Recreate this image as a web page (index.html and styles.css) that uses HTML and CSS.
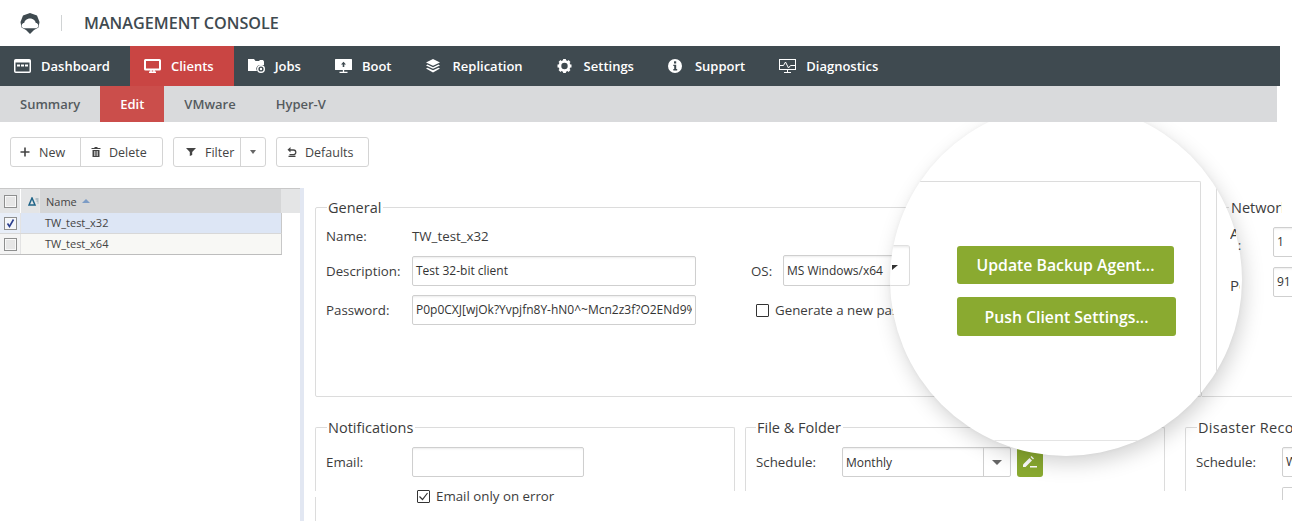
FILE: index.html
```html
<!DOCTYPE html>
<html lang="en">
<head>
<meta charset="utf-8">
<title>Management Console</title>
<link rel="stylesheet" href="styles.css">
</head>
<body>
<div class="page">
  <header class="topbar">
    <svg class="logo" viewBox="0 0 20 21" width="20" height="21"><path fill="#3f4a50" d="M10 0 L17 2.500 L19.500 9 L18.500 14.500 L14 17 L10 21 L6 17 L1.500 14.500 L.5 9 L3 2.500Z"/><path fill="#fff" d="M4 15.300C2 15 1.300 13.400 1.800 11.800 2.200 10.700 3.200 10.100 4.200 10.100 4.500 7.800 6.900 5.600 10 5.600 13.100 5.600 15.500 7.800 15.800 10.100 16.800 10.100 17.800 10.700 18.200 11.800 18.700 13.400 18 15 16 15.300Z"/></svg>
    <span class="topbar-divider"></span>
    <h1 class="title">MANAGEMENT CONSOLE</h1>
  </header>

  <nav class="mainnav">
    <a class="nav-item"><svg class="nav-icon" viewBox="0 0 17 14"><rect x=".75" y=".75" width="15.5" height="12.5" rx="1" fill="none" stroke="#fff" stroke-width="1.500"/><rect x="1" y="1" width="15" height="2.500" fill="#fff"/><path stroke="#fff" stroke-width="2" d="M3 6.500h3M7 6.500h3M11 6.500h3"/></svg>Dashboard</a>
    <a class="nav-item active"><svg class="nav-icon" viewBox="0 0 17 14"><rect x="1" y="1" width="15" height="9.500" rx=".5" fill="none" stroke="#fff" stroke-width="2"/><path stroke="#fff" stroke-width="1.500" d="M7 11v1.500M10 11v1.500M5 13.200h7"/></svg>Clients</a>
    <a class="nav-item"><svg class="nav-icon" viewBox="0 0 17 14"><path fill="#fff" d="M0 0h6l1.500 2h3.500l1-1h3l1 1.500v3.500h-5a4 4 0 0 0-2 6h-9.500z"/><circle cx="13" cy="10" r="3.300" fill="none" stroke="#fff" stroke-width="1.400"/><circle cx="13" cy="10" r="1.200" fill="#fff"/></svg>Jobs</a>
    <a class="nav-item"><svg class="nav-icon" viewBox="0 0 17 14"><rect width="17" height="11" rx=".5" fill="#fff"/><path fill="#3f4a50" d="M8.500 2.800l2.500 2.700h-1.700v2.500h-1.600v-2.500h-1.700z"/><path stroke="#fff" stroke-width="1.300" d="M8.500 11v2M4.500 13.400h8"/></svg>Boot</a>
    <a class="nav-item"><svg class="nav-icon" viewBox="0 0 17 14"><g transform="translate(-1.500 0)"><path fill="#fff" d="M8.500 0l7 3.400-7 3.400-7-3.400z"/><path fill="#fff" d="M3 5.600l5.500 2.700 5.500-2.700 1.500.8-7 3.400-7-3.400z"/><path fill="#fff" d="M3 8.700l5.500 2.600 5.500-2.600 1.500.8-7 4-7-4z"/></g></svg>Replication</a>
    <a class="nav-item"><svg class="nav-icon" viewBox="0 0 17 14"><g transform="translate(7.500 7)"><circle r="4.600" fill="none" stroke="#fff" stroke-width="2.800"/><path stroke="#fff" stroke-width="2.800" d="M0-7v14M-7 0h14M-5-5l10 10M-5 5l10-10" stroke-dasharray="2.300 9.800"/></g></svg>Settings</a>
    <a class="nav-item"><svg class="nav-icon" viewBox="0 0 17 14"><circle cx="7" cy="7" r="7" fill="#fff"/><rect x="6" y="2.300" width="2.200" height="2.200" fill="#3f4a50"/><path fill="#3f4a50" d="M5.300 5.700h2.900v4.400h1v1.300h-3.900v-1.300h.9v-3.100h-.9z"/></svg>Support</a>
    <a class="nav-item"><svg class="nav-icon" viewBox="0 0 17 14"><rect x=".5" y=".5" width="16" height="10" fill="none" stroke="#fff"/><path fill="none" stroke="#fff" d="M1 6.500h3.500l2-3.500 3 6 2-2.500h4.500"/><path stroke="#fff" d="M8.500 11v2M5 13.500h7"/></svg>Diagnostics</a>
  </nav>

  <nav class="subnav">
    <a class="sub-item">Summary</a>
    <a class="sub-item active">Edit</a>
    <a class="sub-item">VMware</a>
    <a class="sub-item">Hyper-V</a>
  </nav>

  <div class="toolbar">
    <div class="btn-group">
      <button class="tool-btn btn-new"><svg class="tool-icon" viewBox="0 0 10 10"><path stroke="#444" stroke-width="1.600" d="M5 .5v9M.5 5h9"/></svg>New</button>
      <button class="tool-btn btn-delete"><svg class="tool-icon" viewBox="0 0 10 10"><path fill="#444" d="M3.500 0h3v1h3v1h-9v-1h3zM1.500 3h7v7h-7z"/><path stroke="#fff" stroke-width=".6" d="M3.500 4v5M5 4v5M6.500 4v5"/></svg>Delete</button>
    </div>
    <div class="btn-group">
      <button class="tool-btn btn-filter"><svg class="tool-icon" viewBox="0 0 10 10"><path fill="#444" d="M0 1h10l-3.800 4v3l-2.400 1v-4z"/></svg>Filter</button>
      <button class="tool-btn btn-caret"><span class="caret"></span></button>
    </div>
    <div class="btn-group">
      <button class="tool-btn btn-defaults"><svg class="tool-icon" viewBox="0 0 10 10"><path fill="none" stroke="#444" stroke-width="1.300" d="M3 3h3.500a2.300 2.300 0 0 1 0 4.600h-4M1.500 9.300h7"/><path fill="#444" d="M3.500 0v5.500l-3-2.700z"/></svg>Defaults</button>
    </div>
  </div>

  <div class="workspace">
    <aside class="list-pane">
      <div class="grid-head">
        <div class="cell-check"><span class="grid-check"></span></div>
        <div class="cell-type"><svg viewBox="0 0 11 9" width="11" height="9"><path fill="none" stroke="#1f6488" stroke-width="1.500" d="M4 1L1 8h6z"/><path stroke="#7f9aa6" d="M7.500 2h3M8.500 4h2M9.500 6h1"/></svg></div>
        <div class="cell-name">Name <span class="sort-up"></span></div>
        <div class="cell-rest"></div>
      </div>
      <div class="grid-row selected">
        <div class="cell-check"><span class="grid-check checked"><svg viewBox="0 0 11 11" width="11" height="11"><path fill="none" stroke="#2c3f8f" stroke-width="1.600" d="M2.500 5.500l2 3 4-7"/></svg></span></div>
        <div class="cell-type"></div>
        <div class="cell-value">TW_test_x32</div>
      </div>
      <div class="grid-row alt">
        <div class="cell-check"><span class="grid-check"></span></div>
        <div class="cell-type"></div>
        <div class="cell-value">TW_test_x64</div>
      </div>
    </aside>
    <div class="splitter"></div>

    <main class="content">
      <div class="content-top">
        <fieldset class="box general">
          <legend>General</legend>
          <div class="general-form">
            <span class="lbl">Name:</span>
            <span class="value name-value">TW_test_x32</span>
            <span></span><span></span><span></span>

            <span class="lbl">Description:</span>
            <span class="input">Test 32-bit client</span>
            <span></span>
            <span class="lbl">OS:</span>
            <span class="input os-combo">MS Windows/x64</span>

            <span class="lbl">Password:</span>
            <span class="input"><span class="input-clip">P0p0CXJ[wjOk?Yvpjfn8Y-hN0^~Mcn2z3f?O2ENd9%</span></span>
            <span></span>
            <label class="check-row generate"><span class="check"></span>Generate a new password</label>
          </div>
        </fieldset>
        <fieldset class="box network">
          <legend><span class="legend-clip">Network</span></legend>
          <div class="network-form">
            <span class="net-label"><span class="net-clip addr-clip">Address</span><span class="net-colon">:</span></span>
            <span class="input"><span class="input-clip addr-value">192.168.1.10</span></span>
            <span class="net-label"><span class="net-clip port-clip">Port:</span></span>
            <span class="input"><span class="input-clip port-value">9155</span></span>
          </div>
        </fieldset>
      </div>

      <div class="content-bottom">
        <fieldset class="box lower notifications">
          <legend>Notifications</legend>
          <div class="form-row">
            <span class="lbl">Email:</span>
            <span class="input email-input"></span>
          </div>
          <label class="check-row email-only"><span class="check"><svg viewBox="0 0 13 13" width="13" height="13"><path fill="none" stroke="#333" stroke-width="1.200" d="M2.500 6.500l3 3 5-6.500"/></svg></span>Email only on error</label>
        </fieldset>
        <fieldset class="box lower file-folder">
          <legend>File &amp; Folder</legend>
          <div class="form-row">
            <span class="lbl">Schedule:</span>
            <span class="combo"><span class="combo-text">Monthly</span><span class="combo-btn"><span class="caret caret-big"></span></span></span>
            <button class="edit-btn"><svg viewBox="0 0 14 12" width="14" height="12"><path fill="#fff" d="M0 8.500L6.500 2l2.500 2.500L2.500 11H0z"/><path fill="#fff" d="M7.500 1L8.500 0l2.500 2.500-1 1z"/><rect x="7" y="10" width="7" height="1.500" fill="#fff"/></svg></button>
          </div>
        </fieldset>
        <fieldset class="box lower disaster">
          <legend>Disaster Recovery</legend>
          <div class="form-row">
            <span class="lbl">Schedule:</span>
            <span class="input disaster-input">Weekly</span>
          </div>
          <span class="input disaster-stub"></span>
        </fieldset>
      </div>
    </main>
  </div>

  <div class="lens">
    <div class="lens-clip">
      <div class="lens-inner">
        <div class="lens-panel">
          <div class="lens-combo"><span class="lens-arrow"></span></div>
          <div class="lens-actions">
            <button class="action-btn update-btn">Update Backup Agent...</button>
            <button class="action-btn push-btn">Push Client Settings...</button>
          </div>
        </div>
        <div class="lens-next"></div>
      </div>
      <div class="lens-rule"></div>
    </div>
  </div>
</div>
</body>
</html>
```

FILE: styles.css
```css
* { box-sizing: border-box; }
html, body { margin: 0; padding: 0; background: #fff; }
body { font-family: "Open Sans", "Liberation Sans", sans-serif; font-size: 13.300px; color: #3c3c3c; }

.page { position: relative; width: 1292px; height: 521px; overflow: hidden; background: #fff; }

/* top bar */
.topbar { display: flex; align-items: center; height: 46px; padding-left: 20px; }
.logo { display: block; flex: none; margin-top: 1px; }
.topbar-divider { width: 1px; height: 16px; margin: 0 22px 0 21px; background: #d0d3d4; }
.title { margin: 0; font-size: 16.200px; font-weight: 600; color: #3f4a50; }

/* main navigation */
.mainnav { position: relative; z-index: 2; display: flex; width: 1280px; height: 40px; background: #3f4a50; }
.nav-item { display: flex; align-items: center; height: 40px; padding: 0 20px 0 14px; color: #fff; font-weight: 600; font-size: 13px; }
.nav-item.active { background: #c94543; }
.nav-icon { flex: none; width: 17px; height: 14px; margin-right: 10px; }

.subnav { position: relative; z-index: 2; display: flex; width: 1277px; height: 36px; background: #d9dadc; }
.sub-item { display: flex; align-items: center; height: 36px; padding: 0 20px; color: #555b5f; font-weight: 600; font-size: 13px; }
.sub-item.active { background: #cb4e4b; color: #fff; width: 64px; justify-content: center; }

/* toolbar */
.toolbar { display: flex; gap: 10px; height: 66px; padding: 15px 0 0 10px; }
.btn-group { display: flex; height: 30px; border: 1px solid #d4d4d4; border-radius: 3px; background: #fff; }
.tool-btn { display: flex; align-items: center; height: 28px; padding: 0; border: 0; background: transparent; font: 12.500px "Open Sans", "Liberation Sans", sans-serif; color: #444; }
.tool-icon { flex: none; width: 10px; height: 10px; }
.btn-new { width: 70px; padding-left: 9px; border-right: 1px solid #d4d4d4; }
.btn-new .tool-icon { margin-right: 9px; }
.btn-delete { width: 81px; padding-left: 10px; }
.btn-delete .tool-icon { margin-right: 8px; }
.btn-filter { width: 67px; padding-left: 12px; border-right: 1px solid #d4d4d4; }
.btn-filter .tool-icon { margin-right: 9px; }
.btn-caret { width: 24px; justify-content: center; }
.btn-defaults { width: 91px; padding-left: 10px; }
.btn-defaults .tool-icon { margin-right: 8px; }
.caret { display: block; width: 0; height: 0; border-left: 3.500px solid transparent; border-right: 3.500px solid transparent; border-top: 4px solid #666; }
.caret-big { border-left-width: 5px; border-right-width: 5px; border-top-width: 5px; }

/* workspace */
.workspace { display: flex; height: 333px; }
.list-pane { flex: none; width: 300px; }
.splitter { flex: none; width: 4px; background: #e2e7f2; }

.grid-head { display: flex; height: 25px; border-top: 1px solid #c8c8c8; background: #d5d6d7; font-size: 11px; color: #444; }
.grid-row { display: flex; width: 282px; height: 21px; border-right: 1px solid #c8c8c8; border-bottom: 1px solid #d8d8d8; font-size: 11px; color: #444; }
.grid-row.alt { background: #f8f8f5; border-bottom-color: #bdbdbd; }
.grid-row.selected { background: #dde6f5; }
.cell-check { flex: none; display: flex; align-items: center; justify-content: center; width: 21px; border-right: 1px solid #e3e3e3; background: #f4f4f4; }
.grid-head .cell-check { background: #e4e5e6; border-right-color: #fff; }
.grid-row.selected .cell-check { background: #e8eef8; }
.cell-type { flex: none; display: flex; align-items: center; justify-content: flex-end; width: 19px; border-right: 1px solid #e8e8e8; }
.grid-head .cell-type { background: #e4e5e6; }
.grid-row .cell-type { width: 0; border: 0; }
.cell-name { flex: none; display: flex; align-items: center; gap: 3px; width: 241px; padding-left: 6px; }
.cell-rest { flex: 1; background: #e4e5e6; }
.cell-value { padding-left: 24px; line-height: 20px; }
.grid-check { display: block; width: 13px; height: 13px; border: 1px solid #8e8f8f; background: #e6e6e6; box-shadow: inset 0 0 0 1px #f8f8f8; }
.grid-check.checked { background: #f3f6fb; }
.grid-check svg { display: block; margin: 0; }
.sort-up { width: 0; height: 0; margin-left: 2px; border-left: 4px solid transparent; border-right: 4px solid transparent; border-bottom: 4px solid #7d9cc5; }

/* content */
.content { flex: 1; min-width: 0; padding: 10px 0 0 11px; }
.content-top { display: flex; height: 199px; }
.box { position: relative; margin: 0; min-width: 0; padding: 0 10px; border: 1px solid #dcdcdc; border-radius: 2px; }
.box legend { margin-left: 1px; padding: 0 2px 0 1px; font-size: 14.500px; line-height: 19px; color: #3c3c3c; white-space: nowrap; }
.general { flex: none; width: 887px; height: 199px; }
.network { flex: none; width: 120px; height: 199px; padding: 0 0 0 28px; border-left: 0; border-right: 0; border-radius: 0; }
.network legend { width: 90px; margin-left: -1px; padding: 0 0 0 2px; }
.legend-clip { display: block; width: 51px; overflow: hidden; }
.lbl { white-space: nowrap; color: #3c3c3c; }
.value { color: #3c3c3c; }

.general-form { display: grid; grid-template-columns: 86px 284px 55px 32px 120px; grid-template-rows: 20px 30px 30px; row-gap: 9.500px; align-items: center; padding-top: 9px; }
.input { display: block; height: 30px; padding: 0 3px; border: 1px solid #cfcfcf; border-radius: 2px; background: #fff; box-shadow: inset 0 2px 2px -1px #ececec; line-height: 28px; font-size: 12px; white-space: nowrap; overflow: hidden; color: #333; }
.input-clip { display: block; overflow: hidden; }
.os-combo { height: 31px; line-height: 29px; width: 120px; }
.generate { grid-column: 4 / 6; padding-left: 5px; white-space: nowrap; }
.check-row { display: flex; align-items: center; gap: 6px; }
.check { flex: none; display: block; width: 13px; height: 13px; border: 1px solid #333; border-radius: 1px; background: #fff; }
.check svg { display: block; margin: -1px; }

.network-form { display: grid; grid-template-columns: 43px 100px; grid-template-rows: 30px 30px; row-gap: 10px; align-items: center; padding-top: 10px; }
.net-label { position: relative; z-index: 3; display: block; font-size: 15px; line-height: 15px; color: #3c3c3c; }
.net-clip { display: block; overflow: hidden; white-space: nowrap; }
.addr-clip { width: 6px; margin-top: -7px; }
.port-clip { width: 10px; margin-top: 6px; }
.net-colon { display: block; padding-left: 8px; font-size: 12px; line-height: 10px; }
.addr-value { width: 7px; }
.port-value { width: 14px; }

.content-bottom { display: flex; height: 124px; padding-top: 21px; }
.lower { height: 73px; border-bottom: 0; border-radius: 2px 2px 0 0; }
.notifications { flex: none; width: 420px; margin-right: 10px; }
.notifications::after { content: ""; position: absolute; left: -1px; top: 60px; width: 1px; height: 42px; background: #dcdcdc; }
.file-folder { flex: none; width: 420px; margin-right: 20px; }
.file-folder legend { margin-left: 0; }
.disaster { flex: none; width: 200px; }
.disaster legend { letter-spacing: .3px; }
.form-row { display: flex; align-items: center; padding-top: 10px; }
.form-row .lbl { flex: none; width: 86px; }
.email-input { width: 172px; }
.email-only { position: relative; margin: 10px 0 0 91px; white-space: nowrap; }
.combo { flex: none; display: flex; width: 169px; height: 30px; border: 1px solid #cfcfcf; border-radius: 2px; box-shadow: inset 0 2px 2px -1px #ececec; }
.combo-text { flex: 1; padding-left: 3px; line-height: 30px; font-size: 12px; color: #333; }
.combo-btn { flex: none; display: flex; align-items: center; justify-content: center; width: 27px; border-left: 1px solid #cfcfcf; }
.edit-btn { flex: none; display: flex; align-items: center; justify-content: center; width: 26px; height: 30px; margin-left: 6px; padding: 0; border: 0; border-radius: 3px; background: #8aaa30; }
.disaster-input { flex: none; width: 100px; }
.disaster-stub { height: 13px; width: 60px; margin: 10px 0 0 86px; border-bottom: 0; border-radius: 2px 2px 0 0; box-shadow: none; }

/* magnifier */
.lens { position: absolute; z-index: 1; left: 890px; top: 104px; width: 352px; height: 352px; border-radius: 50%; background: #fff; box-shadow: 3px 8px 20px rgba(0, 0, 0, .17), 0 0 4px rgba(0, 0, 0, .04); }
.lens-clip { width: 100%; height: 100%; border-radius: 50%; overflow: hidden; }
.lens-inner { display: flex; gap: 15px; padding-top: 77px; height: 336px; }
.lens-panel { flex: none; display: flex; width: 311px; height: 217px; border-top: 1px solid #dcdcdc; border-right: 1px solid #dcdcdc; border-radius: 0 2px 0 0; }
.lens-combo { flex: none; width: 20px; height: 41px; margin-top: 63px; padding-top: 19px; border-top: 1px solid #e0e0e0; border-right: 1px solid #dcdcdc; border-bottom: 1px solid #dcdcdc; border-radius: 0 3px 3px 0; box-shadow: inset 0 3px 3px -2px #e6e6e6; }
.lens-arrow { display: block; width: 0; height: 0; margin-left: 2px; border-top: 5px solid #333; border-right: 6px solid transparent; }
.lens-actions { display: flex; flex-direction: column; align-items: flex-start; gap: 13px; margin-left: 47px; padding-top: 64px; }
.action-btn { display: block; height: 38px; padding: 0; border: 0; border-radius: 3px; background: #8aaa30; color: #fff; font: 600 15.800px "Open Sans", "Liberation Sans", sans-serif; }
.update-btn { width: 217px; }
.push-btn { width: 219px; height: 39px; }
.lens-next { flex: none; width: 1px; height: 336px; background: #dcdcdc; }
.lens-rule { height: 1px; background: #e4e4e4; }
```
